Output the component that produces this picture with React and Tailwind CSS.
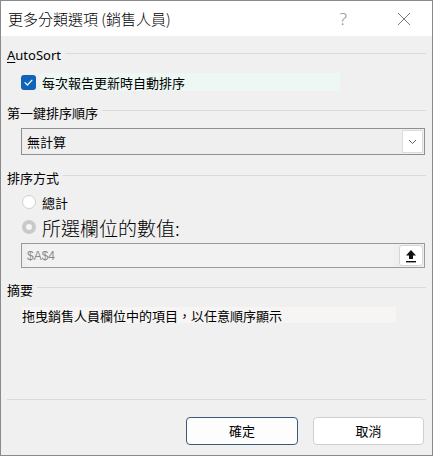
const font = { fontFamily: '"Noto Sans", "Noto Sans CJK TC", sans-serif' };
const cjk = { fontFamily: '"Noto Sans CJK TC", sans-serif' };

function Header({ children, underlineFirst }) {
  return (
    <div className="flex h-[20px] items-center gap-[4px] text-[13px] text-black">
      <span className="leading-none whitespace-nowrap" style={underlineFirst ? font : cjk}>
        {underlineFirst ? (
          <>
            <span className="underline underline-offset-2">{children[0]}</span>
            {children.slice(1)}
          </>
        ) : (
          children
        )}
      </span>
      <div className="flex-1 border-t border-[#dadada] -mt-[3px]" />
    </div>
  );
}

function Check() {
  return (
    <div className="w-[15px] h-[15px] rounded-[3px] bg-[#0f64b8] flex items-center justify-center">
      <svg width="11" height="11" viewBox="0 0 11 11" fill="none">
        <path d="M2 5.6 L4.4 8 L9 3.2" stroke="white" strokeWidth="1.2" strokeLinecap="round" strokeLinejoin="round" />
      </svg>
    </div>
  );
}

export default function App() {
  return (
    <div
      className="w-[433px] h-[456px] border border-[#8a8a8a] bg-[#f0f0f0] flex flex-col"
      style={font}
    >
      {/* title bar */}
      <div className="h-[35px] bg-white flex items-center pl-[7px] shrink-0">
        <span className="text-[15px] font-light text-black leading-none whitespace-nowrap" style={cjk}>
          更多分類選項 (銷售人員)
        </span>
        <span className="ml-auto mr-[50px] text-[17px] text-[#8a8a8a] font-light leading-none">?</span>
        <svg width="14" height="14" viewBox="0 0 14 14" className="mr-[21px]">
          <path d="M1 1 L13 13 M13 1 L1 13" stroke="#7a7a7a" strokeWidth="1" />
        </svg>
      </div>

      <div className="flex flex-col px-[6px] pt-[9px] flex-1">
        <Header underlineFirst>{"AutoSort"}</Header>

        <div className="mt-[7px] h-[20px] flex items-center pl-[14px]">
          <Check />
          <div className="ml-[4px] h-[18px] w-[300px] bg-[#edf8f4] flex items-center pl-[2px]">
            <span className="text-[13px] leading-none text-black" style={cjk}>
              每次報告更新時自動排序
            </span>
          </div>
        </div>

        <div className="mt-[10px]">
          <Header>第一鍵排序順序</Header>
        </div>

        <div className="mt-[6px] mx-[14px] mr-[1px] h-[27px] border border-[#8f8f8f] bg-[#efefef] flex items-center pl-[5px] pr-[1px]">
          <span className="text-[13px] leading-none text-black" style={cjk}>無計算</span>
          <div className="ml-auto h-[23px] w-[21px] bg-white border border-[#dcdcdc] flex items-center justify-center">
            <svg width="9" height="6" viewBox="0 0 9 6">
              <path d="M1 1 L4.5 4.5 L8 1" stroke="#555" strokeWidth="0.9" fill="none" />
            </svg>
          </div>
        </div>

        <div className="mt-[12px]">
          <Header>排序方式</Header>
        </div>

        <div className="mt-[5px] h-[20px] flex items-center pl-[15px]">
          <div className="w-[14px] h-[14px] rounded-full border border-[#cfcfcf] bg-white" />
          <span className="ml-[6px] text-[13px] leading-none text-black" style={cjk}>總計</span>
        </div>

        <div className="mt-[5px] h-[20px] flex items-center pl-[15px]">
          <div className="w-[14px] h-[14px] rounded-full bg-[#c9c9c9] flex items-center justify-center">
            <div className="w-[6px] h-[6px] rounded-full bg-[#f4f4f4]" />
          </div>
          <span className="ml-[6px] text-[19px] font-light leading-none text-black" style={cjk}>所選欄位的數值:</span>
        </div>

        <div className="mt-[6px] ml-[14px] mr-[1px] h-[25px] border border-[#9a9a9a] bg-[#efefef] flex items-center pl-[5px] pr-[1px]">
          <div className="flex-1 h-full flex items-center bg-[#f2f2f2]">
            <span className="text-[12px] leading-none text-[#8a8a8a]" style={{ fontFamily: '"Liberation Sans", sans-serif' }}>$A$4</span>
          </div>
          <div className="ml-[6px] h-[21px] w-[24px] bg-white border border-[#d6d6d6] rounded-[3px] flex items-center justify-center">
            <svg width="12" height="14" viewBox="0 0 12 14">
              <path d="M6 1 L11 6.5 L8 6.5 L8 10 L4 10 L4 6.5 L1 6.5 Z" fill="#111" />
              <rect x="1" y="12" width="10" height="1.4" fill="#111" />
            </svg>
          </div>
        </div>

        <div className="mt-[11px]">
          <Header>摘要</Header>
        </div>

        <div className="mt-[8px] ml-[15px] w-[374px] h-[16px] bg-[#f6f5f4] flex items-center">
          <span className="text-[13px] leading-none text-black" style={cjk}>
            拖曳銷售人員欄位中的項目，以任意順序顯示
          </span>
        </div>

        <div className="mt-[76px] border-t border-[#dadada]" />

        <div className="mt-[17px] flex justify-end gap-[15px] pr-[2px]">
          <button className="w-[112px] h-[28px] rounded-[4px] border border-[#3b5a78] bg-[#fdfdfd] text-[13px] text-black" style={cjk}>
            確定
          </button>
          <button className="w-[111px] h-[28px] rounded-[4px] border border-[#cfcfcf] bg-white text-[13px] text-black" style={cjk}>
            取消
          </button>
        </div>
      </div>
    </div>
  );
}
